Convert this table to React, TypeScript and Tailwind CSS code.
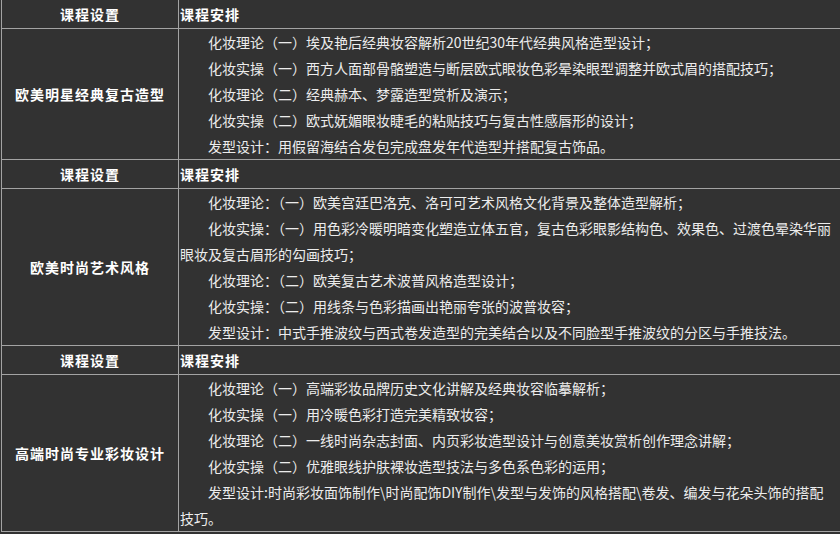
import React from 'react';

type Section = {
  title: string;
  lines: React.ReactNode[];
};

const sections: Section[] = [
  {
    title: '欧美明星经典复古造型',
    lines: [
      '化妆理论（一）埃及艳后经典妆容解析20世纪30年代经典风格造型设计；',
      '化妆实操（一）西方人面部骨骼塑造与断层欧式眼妆色彩晕染眼型调整并欧式眉的搭配技巧；',
      '化妆理论（二）经典赫本、梦露造型赏析及演示；',
      '化妆实操（二）欧式妩媚眼妆睫毛的粘贴技巧与复古性感唇形的设计；',
      '发型设计：用假留海结合发包完成盘发年代造型并搭配复古饰品。',
    ],
  },
  {
    title: '欧美时尚艺术风格',
    lines: [
      '化妆理论：（一）欧美宫廷巴洛克、洛可可艺术风格文化背景及整体造型解析；',
      '化妆实操：（一）用色彩冷暖明暗变化塑造立体五官，复古色彩眼影结构色、效果色、过渡色晕染华丽眼妆及复古眉形的勾画技巧；',
      '化妆理论：（二）欧美复古艺术波普风格造型设计；',
      '化妆实操：（二）用线条与色彩描画出艳丽夸张的波普妆容；',
      '发型设计：中式手推波纹与西式卷发造型的完美结合以及不同脸型手推波纹的分区与手推技法。',
    ],
  },
  {
    title: '高端时尚专业彩妆设计',
    lines: [
      '化妆理论（一）高端彩妆品牌历史文化讲解及经典妆容临摹解析；',
      '化妆实操（一）用冷暖色彩打造完美精致妆容；',
      '化妆理论（二）一线时尚杂志封面、内页彩妆造型设计与创意美妆赏析创作理念讲解；',
      '化妆实操（二）优雅眼线护肤裸妆造型技法与多色系色彩的运用；',
      <>
        发型设计:时尚彩妆面饰制作\时尚配饰DIY制作\发型与发饰的风格搭配\卷发、编发与花朵头饰的搭配
        <br />
        技巧。
      </>,
    ],
  },
];

const HeaderRow = () => (
  <div className="flex h-[29px] border-b border-[#a3a3a3] font-bold text-white tracking-[1px] leading-[28px]">
    <div className="w-[177px] shrink-0 border-r border-[#a3a3a3] text-center">课程设置</div>
    <div className="flex-1 pl-px">课程安排</div>
  </div>
);

const App = () => {
  return (
    <div
      className="w-[840px] h-[534px] overflow-hidden bg-[#323232] text-[14px]"
      style={{ fontFamily: '"Noto Sans CJK SC", "Noto Sans", sans-serif' }}
    >
      <div className="ml-px w-[842px] border-l border-r border-[#a3a3a3]">
        {sections.map((s) => (
          <div key={s.title}>
            <HeaderRow />
            <div className="flex border-b border-[#a3a3a3]">
              <div className="w-[177px] shrink-0 border-r border-[#a3a3a3] flex items-center justify-center font-bold text-white tracking-[1px]">
                {s.title}
              </div>
              <div className="w-[660px] pl-px text-[#ececec] leading-[26px]">
                {s.lines.map((l, i) => (
                  <p key={i} className="indent-[28px]">
                    {l}
                  </p>
                ))}
              </div>
            </div>
          </div>
        ))}
      </div>
    </div>
  );
};

export default App;
